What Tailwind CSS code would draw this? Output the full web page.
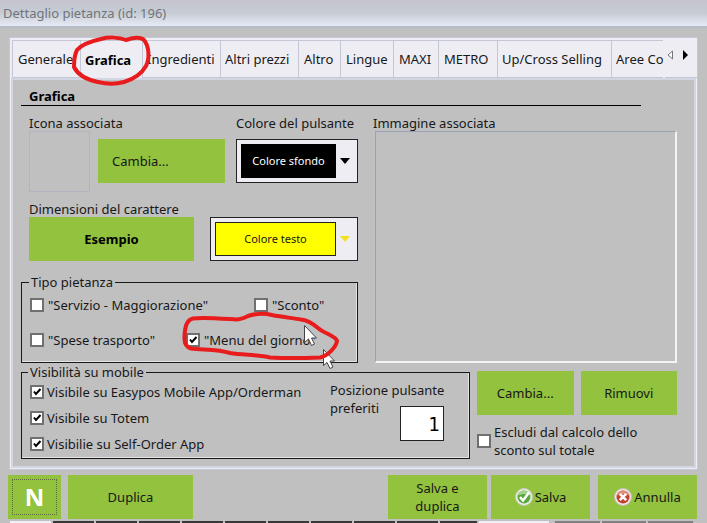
<!DOCTYPE html>
<html lang="it">
<head>
    <meta charset="UTF-8">
    <meta name="viewport" content="width=device-width, initial-scale=1.0">
    <title>Dettaglio pietanza</title>
    <script src="https://cdn.jsdelivr.net/npm/@tailwindcss/browser@4"></script>
</head>
<body class="relative bg-[#c0c0c0] font-['Noto_Sans','DejaVu_Sans_Condensed',sans-serif] text-[13px] leading-[18px] text-[#181818] overflow-hidden">
    <header class="h-[28px] flex items-center pl-[3px] border-b-2 border-[#b4bcc8] bg-linear-to-b from-[#c4c4cc] via-[#c6ccd4] to-[#e6eaf4]">
        <h1 class="text-[#70747c]">Dettaglio pietanza (id: 196)</h1>
    </header>

    <main class="mt-[9px] mx-[9px] border border-[#c4c8d6] bg-[#eeedf3]">
        <!--Tabs-->
        <div class="flex pt-[2px] pl-[2px]">
            <div role="tablist" class="flex-1 min-w-0 mr-[2px] overflow-hidden flex h-[38px] border-t border-l border-[#c4c8d4] whitespace-nowrap">
                <button role="tab" class="w-[68px] shrink-0 pl-[5px] text-left border-r border-b border-[#c4c8d4]">Generale</button>
                <button role="tab" aria-selected="true" class="w-[62px] shrink-0 pl-[4px] text-left font-bold border-r border-[#c4c8d4] text-black">Grafica</button>
                <button role="tab" class="w-[78px] shrink-0 pl-[4px] text-left border-r border-b border-[#c4c8d4]">Ingredienti</button>
                <button role="tab" class="w-[78px] shrink-0 pl-[4px] text-left border-r border-b border-[#c4c8d4]">Altri prezzi</button>
                <button role="tab" class="w-[42px] shrink-0 pl-[5px] text-left border-r border-b border-[#c4c8d4]">Altro</button>
                <button role="tab" class="w-[53px] shrink-0 pl-[5px] text-left border-r border-b border-[#c4c8d4]">Lingue</button>
                <button role="tab" class="w-[45px] shrink-0 pl-[5px] text-left border-r border-b border-[#c4c8d4]">MAXI</button>
                <button role="tab" class="w-[59px] shrink-0 pl-[5px] text-left border-r border-b border-[#c4c8d4]">METRO</button>
                <button role="tab" class="w-[114px] shrink-0 pl-[4px] text-left border-r border-b border-[#c4c8d4]">Up/Cross Selling</button>
                <button role="tab" class="w-[90px] shrink-0 pl-[4px] text-left border-b border-[#c4c8d4]">Aree Co</button>
            </div>
            <div class="w-[32px] flex items-start pt-[10px] gap-[8px] border-b border-[#c4c8d4]">
                <button aria-label="Schede precedenti" class="pl-[2px]">
                    <svg width="7" height="10" viewBox="0 0 7 10"><path d="M5.5 1v8L1 5z" fill="#fff" stroke="#777"/></svg>
                </button>
                <button aria-label="Schede successive">
                    <svg width="7" height="10" viewBox="0 0 7 10"><path d="M1 0v10l5-5z" fill="#000"/></svg>
                </button>
            </div>
        </div>

        <!--Scheda Grafica-->
        <div class="ml-[1px] mr-[1px] mb-[1px] border-2 border-[#d2d6e2] bg-[#c0c0c0] pl-[8px] pr-[17px] pb-[7px]">
            <h2 class="mr-[36px] pt-[7px] pl-[8px] border-b border-black font-bold text-black">Grafica</h2>

            <div class="flex mt-[8px]">
                <div class="w-[337px] shrink-0">
                    <div class="flex pl-[8px] h-[17px]">
                        <div class="w-[207px]">Icona associata</div>
                        <label for="sfondo">Colore del pulsante</label>
                    </div>
                    <div class="flex pl-[8px] h-[60px] items-center">
                        <div class="size-[61px] border border-[#b4b4c0]"></div>
                        <button class="ml-[8px] w-[127px] h-[44px] pl-[14px] text-left bg-[#92c23e]">Cambia...</button>
                        <div class="ml-auto w-[122px] h-[44px] p-[4px] flex items-center border border-[#222] bg-[#eeedf3]">
                            <select id="sfondo" class="appearance-none w-[95px] h-full bg-black text-white text-[11px] text-center">
                                <option>Colore sfondo</option>
                            </select>
                            <svg class="ml-[4px]" width="10" height="6" viewBox="0 0 10 6"><path d="M0 0h10L5 6z" fill="#000"/></svg>
                        </div>
                    </div>
                    <label for="testo" class="block pl-[8px] mt-[9px] h-[17px]">Dimensioni del carattere</label>
                    <div class="flex pl-[8px]">
                        <button class="w-[165px] h-[44px] font-bold text-black bg-[#92c23e]">Esempio</button>
                        <div class="ml-auto w-[148px] h-[44px] p-[4px] flex items-center border border-[#222] bg-[#eeedf3]">
                            <select id="testo" aria-label="Colore testo" class="appearance-none w-[121px] h-full border border-[#222] bg-[#ffff00] text-[11px] text-center">
                                <option>Colore testo</option>
                            </select>
                            <svg class="ml-[4px]" width="10" height="6" viewBox="0 0 10 6"><path d="M0 0h10L5 6z" fill="#f2e21c"/></svg>
                        </div>
                    </div>

                    <fieldset class="mt-[12px] pl-[8px] pb-[13px] border border-[#181818] shadow-[inset_-1px_-1px_0_#e4e4e4]">
                        <legend class="px-[2px] -ml-[1px]">Tipo pietanza</legend>
                        <div class="flex items-center pt-[5px]">
                            <label class="w-[224px] flex items-center gap-[4px]">
                                <input type="checkbox" class="appearance-none size-[14px] border-2 border-[#707070] bg-white">"Servizio - Maggiorazione"
                            </label>
                            <label class="flex items-center gap-[4px]">
                                <input type="checkbox" class="appearance-none size-[14px] border-2 border-[#707070] bg-white">"Sconto"
                            </label>
                        </div>
                        <div class="flex items-center pt-[17px]">
                            <label class="w-[156px] flex items-center gap-[4px]">
                                <input type="checkbox" class="appearance-none size-[14px] border-2 border-[#707070] bg-white">"Spese trasporto"
                            </label>
                            <label class="flex items-center gap-[4px]">
                                <span class="grid size-[14px]">
                                    <input type="checkbox" checked class="col-start-1 row-start-1 appearance-none size-[14px] border-2 border-[#707070] bg-white">
                                    <svg class="col-start-1 row-start-1 pointer-events-none" viewBox="0 0 14 14"><path d="M4 6.500l2 2.500 4.500-5" fill="none" stroke="#000" stroke-width="2"/></svg>
                                </span>"Menu del giorno"
                            </label>
                        </div>
                    </fieldset>
                </div>

                <div class="flex-1 ml-[15px] flex flex-col">
                    <div class="h-[17px]">Immagine associata</div>
                    <div class="flex-1 ml-[2px] border-l border-t border-[#9aa0b8] border-r-2 border-b-2 border-r-[#f4f4f0] border-b-[#f4f4f0]"></div>
                </div>
            </div>

            <div class="flex">
                <fieldset class="w-[449px] shrink-0 pl-[8px] pb-[5px] flex border border-[#181818] shadow-[inset_-1px_-1px_0_#e4e4e4]">
                    <legend class="px-[2px] -ml-[2px]">Visibilità su mobile</legend>
                    <div class="w-[300px] flex flex-col gap-[8px] pt-[2px]">
                        <label class="flex items-center gap-[3px]">
                            <span class="grid size-[14px]">
                                <input type="checkbox" checked class="col-start-1 row-start-1 appearance-none size-[14px] border-2 border-[#707070] bg-white">
                                <svg class="col-start-1 row-start-1 pointer-events-none" viewBox="0 0 14 14"><path d="M4 6.500l2 2.500 4.500-5" fill="none" stroke="#000" stroke-width="2"/></svg>
                            </span>Visibile su Easypos Mobile App/Orderman
                        </label>
                        <label class="flex items-center gap-[3px]">
                            <span class="grid size-[14px]">
                                <input type="checkbox" checked class="col-start-1 row-start-1 appearance-none size-[14px] border-2 border-[#707070] bg-white">
                                <svg class="col-start-1 row-start-1 pointer-events-none" viewBox="0 0 14 14"><path d="M4 6.500l2 2.500 4.500-5" fill="none" stroke="#000" stroke-width="2"/></svg>
                            </span>Visibile su Totem
                        </label>
                        <label class="flex items-center gap-[3px]">
                            <span class="grid size-[14px]">
                                <input type="checkbox" checked class="col-start-1 row-start-1 appearance-none size-[14px] border-2 border-[#707070] bg-white">
                                <svg class="col-start-1 row-start-1 pointer-events-none" viewBox="0 0 14 14"><path d="M4 6.500l2 2.500 4.500-5" fill="none" stroke="#000" stroke-width="2"/></svg>
                            </span>Visibilie su Self-Order App
                        </label>
                    </div>
                    <div class="flex-1 grid">
                        <label for="posizione" class="col-start-1 row-start-1">Posizione pulsante<br>preferiti</label>
                        <input id="posizione" value="1" class="col-start-1 row-start-1 mt-[25px] ml-[70px] w-[44px] h-[35px] px-[3px] border border-[#222] bg-white text-right text-[20px] text-black font-['DejaVu_Sans_Condensed',sans-serif]">
                    </div>
                </fieldset>

                <div class="flex-1 ml-[7px] mt-[8px]">
                    <div class="flex gap-[7px]">
                        <button class="flex-1 h-[44px] bg-[#92c23e]">Cambia...</button>
                        <button class="flex-1 h-[44px] bg-[#92c23e]">Rimuovi</button>
                    </div>
                    <label class="flex items-center gap-[3px] mt-[8px]">
                        <input type="checkbox" class="appearance-none size-[14px] shrink-0 border-2 border-[#707070] bg-white">
                        <span>Escludi dal calcolo dello<br>sconto sul totale</span>
                    </label>
                </div>
            </div>
        </div>
    </main>

    <footer class="flex mt-[5px] pl-[8px] pr-[10px]">
        <button class="w-[53px] h-[44px] p-[4px] bg-[#92c23e]">
            <span class="flex h-full items-center justify-center border border-dotted border-[#5c6c3c] text-white text-[24px] font-bold">N</span>
        </button>
        <button class="ml-[7px] w-[125px] h-[44px] bg-[#92c23e]">Duplica</button>
        <button class="ml-auto w-[99px] h-[44px] bg-[#92c23e]">Salva e<br>duplica</button>
        <button class="ml-[4px] w-[99px] h-[44px] flex items-center justify-center gap-[2px] bg-[#92c23e]">
            <svg width="18" height="18" viewBox="0 0 18 18">
                <circle cx="9" cy="9" r="8.500" fill="#eceee8" stroke="#c2c8b8"/>
                <circle cx="9" cy="9" r="6.500" fill="#58a83c"/>
                <path d="M3 7.500a6.200 6.200 0 0 1 12 0c-4-2-8-2-12 0z" fill="#a4d48c"/>
                <path d="M5 9l3 3.500 6-8" fill="none" stroke="#fff" stroke-width="2.500"/>
            </svg>
            Salva
        </button>
        <button class="ml-[8px] w-[99px] h-[44px] flex items-center justify-center gap-[2px] bg-[#92c23e]">
            <svg width="18" height="18" viewBox="0 0 18 18">
                <circle cx="9" cy="9" r="8.500" fill="#eceae8" stroke="#c8beb4"/>
                <circle cx="9" cy="9" r="6.500" fill="#c8402c"/>
                <path d="M3 7.500a6.200 6.200 0 0 1 12 0c-4-2-8-2-12 0z" fill="#e08c78"/>
                <path d="M5.800 5.800l6.400 6.400M12.200 5.800l-6.400 6.400" stroke="#fff" stroke-width="2.600"/>
            </svg>
            Annulla
        </button>
    </footer>

    <!--Finestra sottostante-->
    <div class="flex gap-[2px] mt-[2px] pl-[10px] pr-[14px] h-[2px]">
        <div class="w-[41px] bg-[#f0f0f4]"></div>
        <div class="w-[41px] bg-[#383838]"></div>
        <div class="w-[41px] bg-[#383838]"></div>
        <div class="w-[41px] bg-[#383838]"></div>
        <div class="w-[41px] bg-[#383838]"></div>
        <div class="w-[41px] bg-[#383838]"></div>
        <div class="w-[41px] bg-[#383838]"></div>
        <div class="w-[41px] bg-[#383838]"></div>
        <div class="w-[41px] bg-[#383838]"></div>
        <div class="w-[41px] bg-[#383838]"></div>
        <div class="w-[37px] bg-[#383838]"></div>
        <div class="w-[70px] bg-[#f0f0f4]"></div>
        <div class="ml-[4px] flex-1 bg-[#808080]"></div>
        <div class="flex-1 bg-[#808080]"></div>
        <div class="flex-1 bg-[#808080]"></div>
    </div>

    <!--Annotazioni e puntatori-->
    <svg class="absolute left-0 top-0 pointer-events-none" width="707" height="523" viewBox="0 0 707 523">
        <g fill="#fff" stroke="#444" stroke-linejoin="round">
            <path d="M304.500 325.500v17l4-3.500 3 6.500 3-1.500-3-6h5z"/>
            <path d="M323.500 349.500v16l3.500-3 3 6 3-1.500-3-6h4.500z"/>
        </g>
        <g fill="none" stroke="#e81c1c" stroke-width="4" stroke-linejoin="round" stroke-linecap="round">
            <path d="M126 40C119 37 108 37 101 39C92 41 82 44 77 50C74 56 74 62 74 67C78 75 88 80 98 82C106 84 117 84 124 82C134 79 142 73 146 66C150 58 149 46 144 40C140 36 132 38 126 40Z"/>
            <path d="M236 319.500C220 318.500 202 317 193 318.500C186 320 185 328 184.500 336C184 343 186 347 191 348.500C203 350 218 349 230 353C244 355 258 355 270 357.500C288 358.500 306 358 320 357.500C328 356 336 347 337 341C336 336 325 334 318 328C312 323 307 320 301 319.500C292 318 282 317 272 315C264 313 254 314 248 316C244 318 240 319.500 236 319.500Z"/>
        </g>
    </svg>
</body>
</html>
